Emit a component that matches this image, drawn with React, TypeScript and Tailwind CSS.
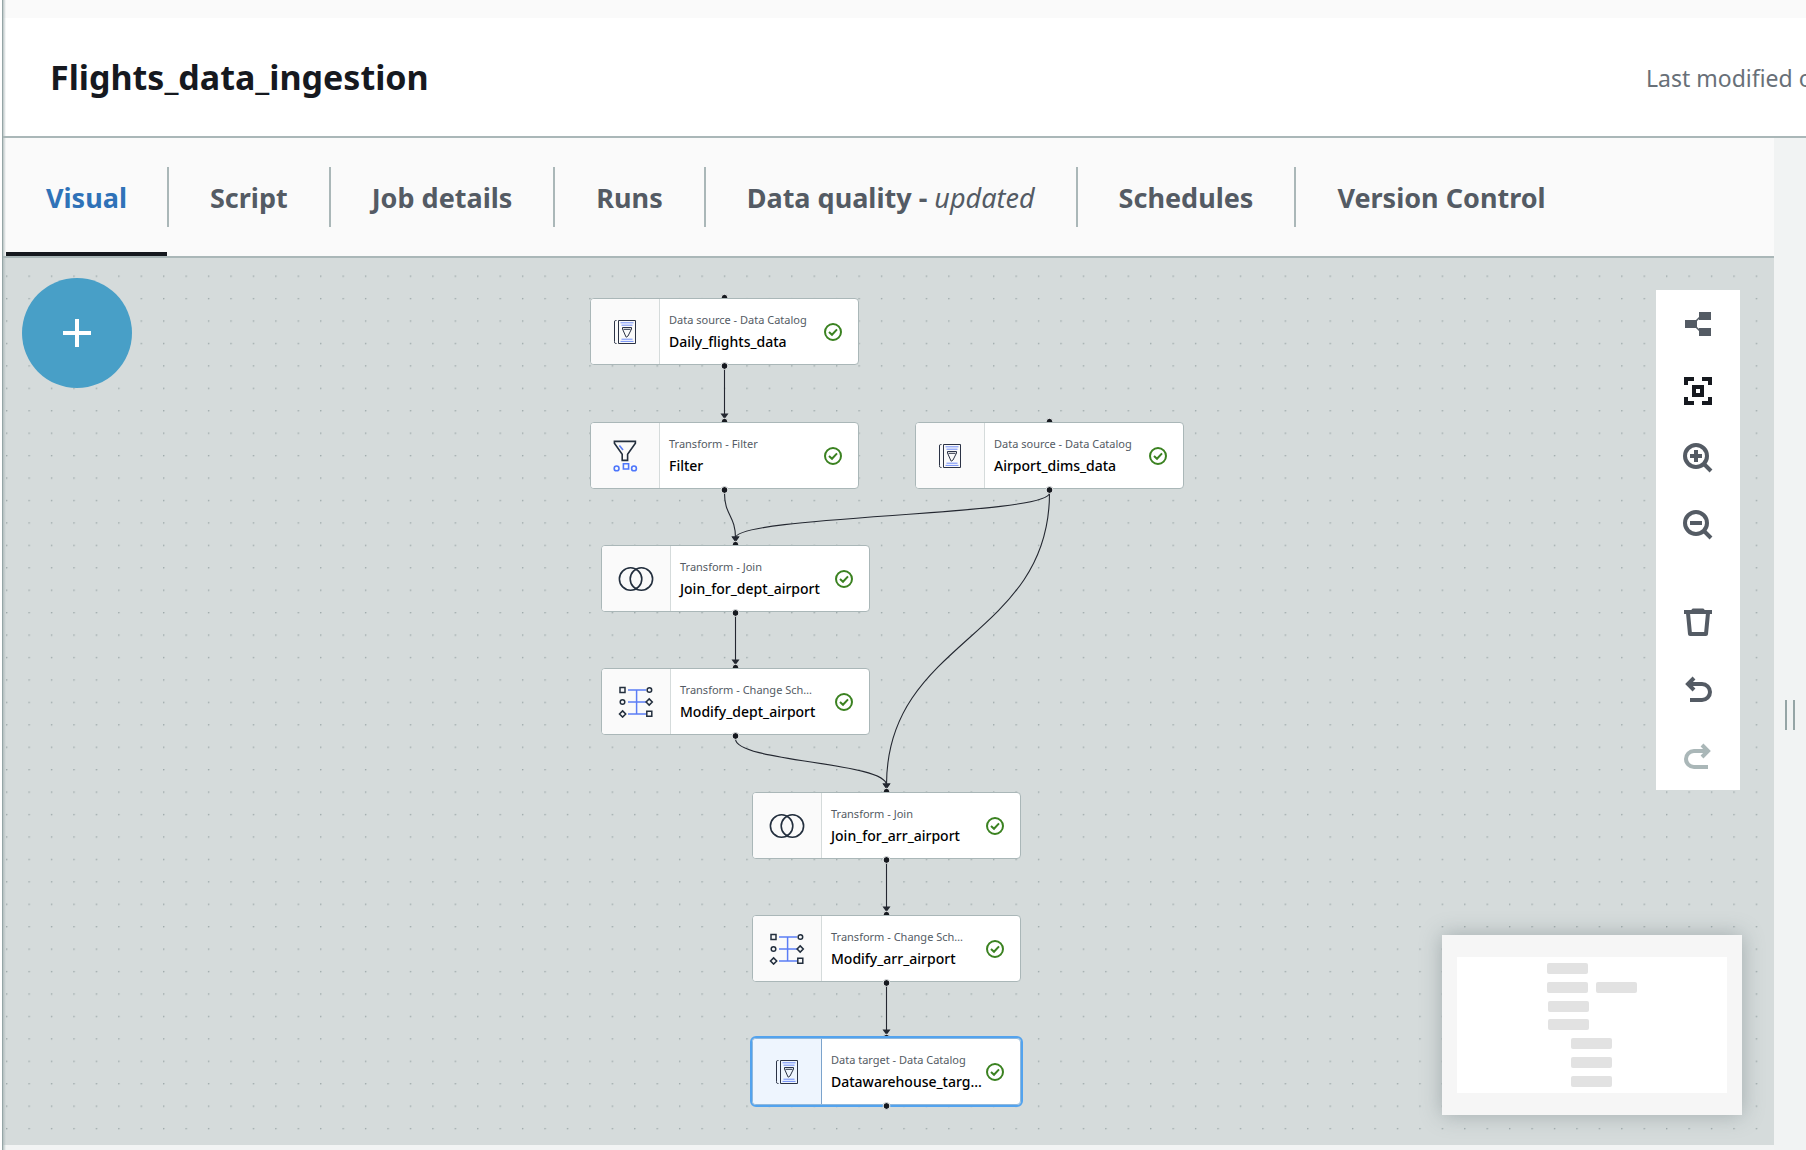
import type { ReactNode } from "react";

type IconKind = "catalog" | "filter" | "join" | "schema";

type FlowNode = {
  id: string;
  x: number;
  y: number;
  icon: IconKind;
  kind: string;
  name: string;
  selected?: boolean;
};

const NODE_W = 269;
const NODE_H = 67;

const nodes: FlowNode[] = [
  { id: "daily", x: 588, y: 40, icon: "catalog", kind: "Data source - Data Catalog", name: "Daily_flights_data" },
  { id: "filter", x: 588, y: 164, icon: "filter", kind: "Transform - Filter", name: "Filter" },
  { id: "airport", x: 913, y: 164, icon: "catalog", kind: "Data source - Data Catalog", name: "Airport_dims_data" },
  { id: "joinDept", x: 599, y: 287, icon: "join", kind: "Transform - Join", name: "Join_for_dept_airport" },
  { id: "modDept", x: 599, y: 410, icon: "schema", kind: "Transform - Change Sch…", name: "Modify_dept_airport" },
  { id: "joinArr", x: 750, y: 534, icon: "join", kind: "Transform - Join", name: "Join_for_arr_airport" },
  { id: "modArr", x: 750, y: 657, icon: "schema", kind: "Transform - Change Sch…", name: "Modify_arr_airport" },
  { id: "target", x: 750, y: 780, icon: "catalog", kind: "Data target - Data Catalog", name: "Datawarehouse_targ…", selected: true },
];

const edges: [string, string][] = [
  ["daily", "filter"],
  ["filter", "joinDept"],
  ["airport", "joinDept"],
  ["airport", "joinArr"],
  ["joinDept", "modDept"],
  ["modDept", "joinArr"],
  ["joinArr", "modArr"],
  ["modArr", "target"],
];

const find = (id: string) => nodes.find((n) => n.id === id)!;

function edgePath(from: string, to: string) {
  const a = find(from);
  const b = find(to);
  const sx = a.x + NODE_W / 2;
  const sy = a.y + NODE_H + 4;
  const tx = b.x + NODE_W / 2;
  const ty = b.y - 7;
  const my = (sy + ty) / 2;
  return `M${sx},${sy} C${sx},${my} ${tx},${my} ${tx},${ty}`;
}

function NodeIcon({ kind }: { kind: IconKind }) {
  if (kind === "catalog") {
    return (
      <svg width="24" height="26" viewBox="0 0 24 26" fill="none" stroke="#2b3245" aria-hidden="true">
        <path d="M3.5 1.5H2.5Q1.5 1.5 1.5 3V22.5Q1.5 24.5 2.5 24.5H3.5" />
        <path d="M5.5 1.5H22.5V24.5H5.5Z" />
        <path d="M7.5 3.8H20.5M8.5 6.2H19.5M8.5 20.2H19.5M7.5 22.4H20.5" stroke="#6f8cf7" />
        <path d="M9.5 8.5H18.5V10L15 17L13.2 18.2L12.6 17L9.5 10ZM10.5 10.3H17.5" />
      </svg>
    );
  }
  if (kind === "filter") {
    return (
      <svg width="26" height="34" viewBox="0 0 26 34" fill="none" strokeWidth="1.6" aria-hidden="true">
        <path d="M2.4 2.4H23.4V4.2L15.6 15.2V21.4H10.2V15.2L2.4 4.2Z" stroke="#232f3e" />
        <path d="M7.4 6.4L11 11" stroke="#5b7df5" />
        <circle cx="4.6" cy="29.4" r="2.4" stroke="#4d76fb" />
        <circle cx="22" cy="29.4" r="2.4" stroke="#4d76fb" />
        <path d="M11.4 24.8H16.6V30H11.4Z" stroke="#4d76fb" />
      </svg>
    );
  }
  if (kind === "join") {
    return (
      <svg width="36" height="26" viewBox="0 0 36 26" fill="none" stroke="#232f3e" strokeWidth="1.6" aria-hidden="true">
        <circle cx="12.6" cy="13" r="11.2" />
        <circle cx="23.4" cy="13" r="11.2" />
      </svg>
    );
  }
  return (
    <svg width="36" height="32" viewBox="0 0 36 32" fill="none" stroke="#232f3e" strokeWidth="1.5" aria-hidden="true">
      <path d="M10 4H28M10 16H28M10 28H28M18.6 4V28" stroke="#5b7df5" />
      <path d="M2 1.6H7V6.6H2ZM28.8 25.2H33.8V30.2H28.8Z" />
      <circle cx="4.5" cy="16" r="2.3" />
      <circle cx="31.4" cy="4" r="2.3" fill="#fafafa" />
      <path d="M4.6 24.9L7.7 28L4.6 31.1L1.5 28ZM31.2 12.9L34.3 16L31.2 19.1L28.1 16Z" fill="#fafafa" />
    </svg>
  );
}

function NodeCard({ node }: { node: FlowNode }) {
  const shell = node.selected
    ? "border-[#8fb8dd] outline-2 outline-[#53a3ee]"
    : "border-[#aab7b8]";
  const cell = node.selected ? "border-[#7ba3cc] bg-[#eef5fe]" : "border-[#d5dbdb] bg-[#fafafa]";
  return (
    <article
      className={`absolute flex h-[67px] w-[269px] items-stretch overflow-hidden rounded-[4px] border bg-white ${shell}`}
      style={{ left: node.x, top: node.y }}
    >
      <div className={`flex w-[69px] shrink-0 items-center justify-center border-r ${cell}`}>
        <NodeIcon kind={node.icon} />
      </div>
      <div className="flex min-w-0 flex-1 flex-col justify-center whitespace-nowrap pl-[9px]">
        <span className="text-[11px] leading-5 text-[#545b64]">{node.kind}</span>
        <span className="text-[14px] leading-6 font-medium text-black">{node.name}</span>
      </div>
      <svg width="18" height="18" viewBox="0 0 18 18" fill="none" stroke="#3b8221" strokeWidth="2" className="mr-4 shrink-0 self-center" aria-label="Ready" role="img">
        <circle cx="9" cy="9" r="8" />
        <path d="M5 9L8 11.8L13 6.4" />
      </svg>
    </article>
  );
}

function Tool({ label, disabled, children }: { label: string; disabled?: boolean; children: ReactNode }) {
  return (
    <button
      type="button"
      aria-label={label}
      disabled={disabled}
      className="flex h-[67px] w-full items-center justify-center text-[#545b64] disabled:text-[#aab7b8]"
    >
      <svg width="32" height="32" viewBox="0 0 32 32" fill="none" stroke="currentColor" strokeWidth="4" aria-hidden="true">
        {children}
      </svg>
    </button>
  );
}

const tabs: { label: string; note?: string }[] = [
  { label: "Visual" },
  { label: "Script" },
  { label: "Job details" },
  { label: "Runs" },
  { label: "Data quality", note: "updated" },
  { label: "Schedules" },
  { label: "Version Control" },
];

function Tabs() {
  return (
    <nav role="tablist" className="flex h-[120px] items-stretch border-b-2 border-[#aab7b8] bg-[#fafafa] pl-1">
      {tabs.map((t, i) => (
        <div key={t.label} className="flex shrink-0 items-center">
          {i > 0 && <span className="h-[60px] w-[2px] bg-[#aab7b8]" />}
          <button
            type="button"
            role="tab"
            aria-selected={i === 0}
            className={
              i === 0
                ? "h-full border-b-4 border-[#16191f] px-10 pt-[6px] text-[27px] font-bold whitespace-nowrap text-[#2f72b8]"
                : "h-full px-[41px] pt-[2px] text-[27px] font-bold whitespace-nowrap text-[#545b64]"
            }
          >
            {t.label}
            {t.note && (
              <>
                {" - "}
                <em className="font-normal">{t.note}</em>
              </>
            )}
          </button>
        </div>
      ))}
    </nav>
  );
}

function MiniMap() {
  const scale = 0.1524;
  return (
    <div className="absolute right-8 bottom-[30px] h-[180px] w-[300px] bg-[#f6f6f6] shadow-[0_0_20px_rgba(84,100,105,0.4)]">
      <svg width="300" height="180" viewBox="0 0 300 180" role="img" aria-label="Graph overview">
        <rect x="15" y="22" width="270" height="136" fill="#fff" />
        {nodes.map((n) => (
          <rect
            key={n.id}
            x={Math.floor((n.x - 588) * scale + 105)}
            y={Math.round((n.y - 40) * scale + 28)}
            width="41"
            height="11"
            rx="2"
            fill="#e2e2e2"
          />
        ))}
      </svg>
    </div>
  );
}

function Canvas() {
  return (
    <section className="relative flex-1 overflow-hidden bg-[#d5dbdb]" aria-label="Job graph">
      <svg className="absolute inset-0 h-full w-full" aria-hidden="true">
        <defs>
          <pattern id="grid" width="15" height="15" patternUnits="userSpaceOnUse" patternTransform="translate(4 17.5) scale(1.4955)">
            <circle cx="0.5" cy="0.5" r="0.5" fill="#8f9c9e" />
          </pattern>
          <marker id="arrow" markerWidth="10" markerHeight="8" refX="5" refY="2" orient="0" markerUnits="userSpaceOnUse">
            <path d="M1 0.5H9L5 6Z" fill="#232730" />
          </marker>
        </defs>
        <rect width="100%" height="100%" fill="url(#grid)" />
        {edges.map(([a, b]) => (
          <path key={a + b} d={edgePath(a, b)} fill="none" stroke="#232730" strokeWidth="1.1" markerEnd="url(#arrow)" />
        ))}
        {nodes.map((n) => (
          <circle key={n.id} cx={n.x + NODE_W / 2} cy={n.y - 0.5} r="3.2" fill="#16191f" stroke="#eef1f1" />
        ))}
      </svg>
      {nodes.map((n) => (
        <NodeCard key={n.id} node={n} />
      ))}
      <svg className="pointer-events-none absolute inset-0 h-full w-full" aria-hidden="true">
        {nodes.map((n) => (
          <circle key={n.id} cx={n.x + NODE_W / 2} cy={n.y + NODE_H + 1} r="3.4" fill="#16191f" stroke="#eef1f1" />
        ))}
      </svg>

      <button
        type="button"
        aria-label="Add node"
        className="absolute top-5 left-5 flex size-[110px] items-center justify-center rounded-full bg-[#489fc7]"
      >
        <svg width="28" height="28" viewBox="0 0 28 28" stroke="#fff" strokeWidth="4" aria-hidden="true">
          <path d="M14 0V28M0 14H28" />
        </svg>
      </button>

      <div role="toolbar" aria-label="Graph tools" className="absolute top-8 right-[34px] flex w-[84px] flex-col bg-white pb-px">
        <Tool label="Auto layout">
          <path d="M3 12H15V20H3ZM17 4H29V12H17ZM17 20H29V28H17Z" fill="currentColor" stroke="none" />
          <path d="M14 13L19 8M14 19L19 24" strokeWidth="1.5" />
        </Tool>
        <Tool label="Fit to screen">
          <g stroke="#16191f">
            <path d="M4 10V4H12M20 4H28V10M28 22V28H20M12 28H4V22" />
            <path d="M12 12H20V20H12Z" />
          </g>
        </Tool>
        <Tool label="Zoom in">
          <circle cx="14" cy="14" r="11" />
          <path d="M14 8V20M8 14H20M22 22L29 29" />
        </Tool>
        <Tool label="Zoom out">
          <circle cx="14" cy="14" r="11" />
          <path d="M8 14H20M22 22L29 29" />
        </Tool>
        <div className="pt-[30px]">
          <Tool label="Delete">
            <path d="M2 6H30M6 7L8 28H24L26 7" strokeLinejoin="round" />
            <path d="M11 4H21" strokeWidth="3" strokeLinecap="round" />
          </Tool>
        </div>
        <Tool label="Undo">
          <path d="M7 11H20A8 8 0 0 1 20 27H8" />
          <path d="M12 5L6 11L12 17" />
        </Tool>
        <Tool label="Redo" disabled>
          <path d="M25 11H12A8 8 0 0 0 12 27H26" />
          <path d="M20 5L26 11L20 17" />
        </Tool>
      </div>

      <MiniMap />
    </section>
  );
}

export default function App() {
  return (
    <div className='flex min-h-screen bg-white pl-[2px] font-["Noto_Sans",sans-serif]'>
      <div className="relative flex min-w-0 flex-1 flex-col">
        <div className="h-[18px] bg-[#fafafa]" />
        <header className="flex h-[120px] items-center justify-between border-b-2 border-[#aab7b8] bg-white pl-[48px]">
          <h1 className="text-[34px] font-bold whitespace-nowrap text-[#16191f]">Flights_data_ingestion</h1>
          <p className="w-40 shrink-0 overflow-hidden pt-[2px] text-[23px] whitespace-nowrap text-[#687078]">Last modified on</p>
        </header>
        <div className="flex flex-1 items-stretch">
          <main className="flex min-w-0 flex-1 flex-col bg-[#f2f4f4] pb-[5px]">
            <Tabs />
            <Canvas />
          </main>
          <aside className="flex w-8 shrink-0 flex-col items-center bg-[#f1f3f3] pt-[562px]">
            <button type="button" aria-label="Resize panel" className="h-[30px] w-[10px] border-x-2 border-[#95a5a6]" />
          </aside>
        </div>
        <div className="pointer-events-none absolute inset-y-0 left-0 w-1 border-l border-[#95a5a6] bg-linear-to-r from-[#aab7b8]/80 to-transparent" />
      </div>
    </div>
  );
}
